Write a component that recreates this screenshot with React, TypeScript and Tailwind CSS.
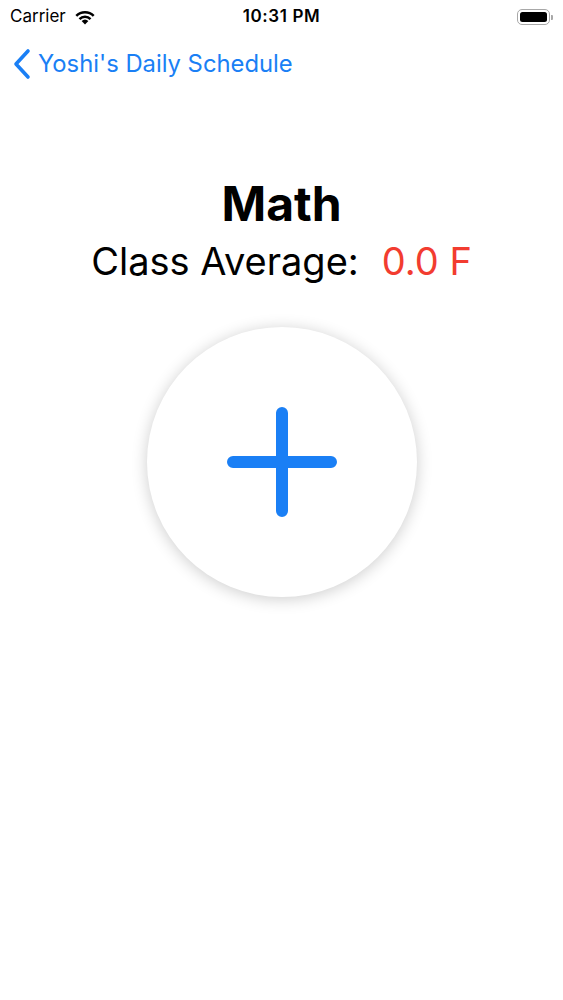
import React from "react";

export default function App() {
  return (
    <div
      className="w-[563px] h-[1000px] bg-white flex flex-col"
      style={{ fontFamily: "Inter, 'Noto Sans', sans-serif" }}
    >
      {/* status bar */}
      <div className="h-[32px] pt-[2px] px-[10px] grid grid-cols-3 items-center text-[17px] text-black">
        <div className="flex items-center gap-[8px]">
          <span>Carrier</span>
          <svg width="22" height="16" viewBox="0 0 22 16">
            <path d="M11 15.5 L7.6 12 A5 5 0 0 1 14.4 12 Z" fill="#000" />
            <path d="M4.6 9.2 A9 9 0 0 1 17.4 9.2 L15.6 11 A6.4 6.4 0 0 0 6.4 11 Z" fill="#000" />
            <path d="M1.4 6 A13.6 13.6 0 0 1 20.6 6 L18.8 7.8 A11 11 0 0 0 3.2 7.8 Z" fill="#000" />
          </svg>
        </div>
        <div className="text-center font-semibold tracking-[0.6px]">10:31 PM</div>
        <div className="flex justify-end items-center">
          <div className="w-[33px] h-[16px] rounded-[5px] border-[1.5px] border-[#a8a8a8] p-[2px]">
            <div className="w-full h-full bg-black rounded-[2.5px]" />
          </div>
          <div className="w-[2px] h-[5px] bg-[#a8a8a8] rounded-r-[1px] ml-[1px]" />
        </div>
      </div>

      {/* nav bar */}
      <div className="h-[64px] flex items-center pl-[12px] gap-[6px] text-[#1a7ff5]">
        <svg width="20" height="32" viewBox="0 0 20 32">
          <path d="M16 3 L4 16 L16 29" stroke="#1a7ff5" strokeWidth="3.6" fill="none" strokeLinecap="round" strokeLinejoin="round" />
        </svg>
        <span className="text-[23.8px]">Yoshi's Daily Schedule</span>
      </div>

      {/* content */}
      <div className="flex flex-col items-center mt-[83px]">
        <div className="text-[48px] font-bold leading-[50px] text-black">Math</div>
        <div className="text-[38px] leading-[44px] text-black mt-[10px] flex gap-[23px]">
          <span>Class Average:</span>
          <span className="text-[#f23c30]">0.0 F</span>
        </div>

        <div className="mt-[44px] w-[270px] h-[270px] rounded-full bg-white shadow-[0_2px_16px_rgba(0,0,0,0.2)] flex items-center justify-center">
          <svg width="110" height="110" viewBox="0 0 110 110">
            <path d="M55 6 L55 104 M6 55 L104 55" stroke="#1a7ff5" strokeWidth="12" strokeLinecap="round" />
          </svg>
        </div>
      </div>
    </div>
  );
}
